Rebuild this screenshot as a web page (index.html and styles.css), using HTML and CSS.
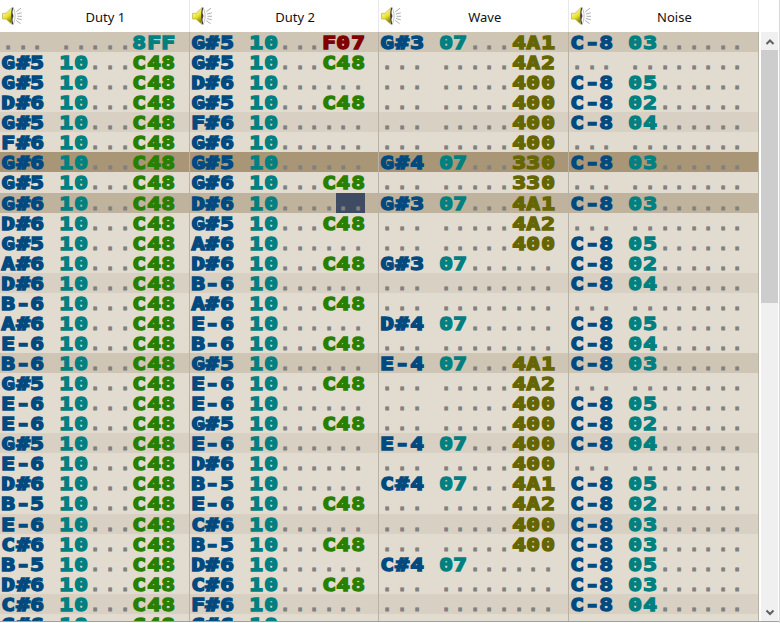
FILE: index.html
```html
<!DOCTYPE html>
<html lang="en">
<head>
<meta charset="utf-8">
<title>Pattern editor</title>
<link rel="stylesheet" href="styles.css">
</head>
<body>
<svg class="defs" aria-hidden="true">
  <defs>
    <linearGradient id="cone" x1="0" x2=".4" y1="0" y2="1">
      <stop offset=".3" stop-color="#faf69c"/>
      <stop offset=".65" stop-color="#e8e020"/>
      <stop offset="1" stop-color="#8c840c"/>
    </linearGradient>
    <symbol id="speaker" viewBox="0 0 20 18">
      <path d="M.5 6.300h3.500L9.800.8v16.400L4 12H.5z" fill="url(#cone)" stroke="#b8b050" stroke-width=".7"/>
      <path d="M10.800.600c3 3.400 3 13.400 0 16.800-1.200-4-1.200-12.800 0-16.800z" fill="#fff" stroke="#999" stroke-width=".6"/>
      <path d="M10.800.600c-1.400 4-1.400 12.800 0 16.800" fill="none" stroke="#222" stroke-width=".9"/>
      <path d="M10 6.200c1.800.8 1.800 4.600 0 5.600z" fill="#444"/>
      <path d="M14.300 4.800l4.700-3.600M15 7l4.800-1.200M15.500 9.300H20M15 11.500l4.800 1.300M14.300 13.500l4.300 3.200" fill="none" stroke="#999" stroke-width=".8"/>
    </symbol>
  </defs>
</svg>
<div class="editor">
  <div class="tracks">
    <header class="heads">
      <div class="head"><svg class="icon"><use href="#speaker"/></svg><span>Duty 1</span></div>
      <div class="head"><svg class="icon"><use href="#speaker"/></svg><span>Duty 2</span></div>
      <div class="head"><svg class="icon"><use href="#speaker"/></svg><span>Wave</span></div>
      <div class="head"><svg class="icon"><use href="#speaker"/></svg><span>Noise</span></div>
    </header>
    <main class="pattern" id="pattern"></main>
  </div>
  <aside class="side">
    <div class="scrollbar">
      <svg class="arrow" viewBox="0 0 17 18"><path d="M5.500 12l3.500-3.500 3.500 3.500" /></svg>
      <div class="thumb"></div>
      <svg class="arrow" viewBox="0 0 17 18"><path d="M5.500 7.500l3.500 3.500 3.500-3.500" /></svg>
    </div>
  </aside>
</div>
<script src="pattern.js"></script>
</body>
</html>
```
FILE: styles.css
```css
* { box-sizing: border-box; }
body { margin: 0; background: #fff; overflow: hidden; }
.defs { position: absolute; width: 0; height: 0; }
.editor { display: flex; width: 780px; height: 623px; border-right: 1px solid #d8d8d8; }
.tracks { width: 759px; display: flex; flex-direction: column; height: 622px; border-bottom: 1px solid #a0a0a0; }
.heads { display: grid; grid-template-columns: repeat(4, 189.700px); height: 32px; flex: none; }
.head { display: flex; align-items: center; border-right: 1px solid #e8e8e8; font: 13px/18px "Noto Sans", "Open Sans", sans-serif; color: #111; padding: 2px 0 0 2px; }
.head span { flex: 1; text-align: center; }
.icon { width: 20px; height: 18px; flex: none; margin-top: -2px; }
.pattern { flex: 1; overflow: hidden; background: #e2dcd0; }
.row { display: grid; grid-template-columns: repeat(4, 189.700px); height: 20.070px; }
.row.beat { background: #d8d0c3; }
.row.bar { background: #cfc5b5; }
.row.play { background: #a89676; }
.row.edit { background: #c0b39d; }
.cell { display: grid; grid-template-columns: repeat(12, 14.580px); border-right: 1px solid #b9b1a3; padding-left: .8px; font: bold 17px/22px "DejaVu Sans Mono", monospace; }
.ch { display: flex; justify-content: center; height: 20.070px; }
.ch b { display: block; width: 10.230px; height: 20px; transform: scaleX(1.340); -webkit-text-stroke: 1.350px currentColor; }
.ch.dash b { transform: scaleX(1.400); -webkit-text-stroke: 1.300px currentColor; }
.ch.dot b { transform: scaleX(1.050); -webkit-text-stroke: .8px currentColor; }
.note { color: #004a80; }
.inst { color: #008080; }
.dot { color: #808080; }
.vol { color: #288000; }
.speed { color: #800000; }
.arp { color: #666600; }
.cursor { background: #3f4a63; }
.side { width: 20px; height: 622px; padding: 32px 0 0 2px; border-bottom: 1px solid #a0a0a0; }
.scrollbar { height: 589px; width: 17px; display: flex; flex-direction: column; background: #f0f0f0; }
.thumb { height: 253px; background: #cdcdcd; margin-bottom: auto; }
.arrow { width: 17px; height: 18px; flex: none; fill: none; stroke: #606060; stroke-width: 2; }
```
FILE: pattern.js
```js
const rows = [
  "... .....8FF|G#5 10...F07|G#3 07...4A1|C-8 03......",
  "G#5 10...C48|G#5 10...C48|... .....4A2|... ........",
  "G#5 10...C48|D#6 10......|... .....400|C-8 05......",
  "D#6 10...C48|G#5 10...C48|... .....400|C-8 02......",
  "G#5 10...C48|F#6 10......|... .....400|C-8 04......",
  "F#6 10...C48|G#6 10......|... .....400|... ........",
  "G#6 10...C48|G#5 10......|G#4 07...330|C-8 03......",
  "G#5 10...C48|G#6 10...C48|... .....330|... ........",
  "G#6 10...C48|D#6 10......|G#3 07...4A1|C-8 03......",
  "D#6 10...C48|G#5 10...C48|... .....4A2|... ........",
  "G#5 10...C48|A#6 10......|... .....400|C-8 05......",
  "A#6 10...C48|D#6 10...C48|G#3 07......|C-8 02......",
  "D#6 10...C48|B-6 10......|... ........|C-8 04......",
  "B-6 10...C48|A#6 10...C48|... ........|... ........",
  "A#6 10...C48|E-6 10......|D#4 07......|C-8 05......",
  "E-6 10...C48|B-6 10...C48|... ........|C-8 04......",
  "B-6 10...C48|G#5 10......|E-4 07...4A1|C-8 03......",
  "G#5 10...C48|E-6 10...C48|... .....4A2|... ........",
  "E-6 10...C48|E-6 10......|... .....400|C-8 05......",
  "E-6 10...C48|G#5 10...C48|... .....400|C-8 02......",
  "G#5 10...C48|E-6 10......|E-4 07...400|C-8 04......",
  "E-6 10...C48|D#6 10......|... .....400|... ........",
  "D#6 10...C48|B-5 10......|C#4 07...4A1|C-8 05......",
  "B-5 10...C48|E-6 10...C48|... .....4A2|C-8 02......",
  "E-6 10...C48|C#6 10......|... .....400|C-8 03......",
  "C#6 10...C48|B-5 10...C48|... .....400|C-8 03......",
  "B-5 10...C48|D#6 10......|C#4 07......|C-8 05......",
  "D#6 10...C48|C#6 10...C48|... ........|C-8 03......",
  "C#6 10...C48|F#6 10......|... ........|C-8 04......",
  "G#6 10...C48|G#6 10......|... ........|... ........"
];
const PLAY = 6, EDIT = 8;

function colour(ch, i, text) {
  if (ch === ".") return "dot";
  if (i < 3) return ch === "-" ? "note dash" : "note";
  if (i < 6) return "inst";
  return { C: "vol", F: "speed", "8": "inst" }[text[9]] || "arp";
}

rows.forEach((line, r) => {
  const row = document.createElement("div");
  row.className = "row" + (r === PLAY ? " play" : r === EDIT ? " edit" : r % 16 === 0 ? " bar" : r % 4 === 0 ? " beat" : "");
  line.split("|").forEach((text, c) => {
    const cell = document.createElement("div");
    cell.className = "cell";
    [...text].forEach((ch, i) => {
      const s = document.createElement("span");
      s.className = "ch " + (ch === " " ? "" : colour(ch, i, text));
      if (r === EDIT && c === 1 && i > 9) s.className += " cursor";
      const b = document.createElement("b");
      b.textContent = ch;
      s.append(b);
      cell.append(s);
    });
    row.append(cell);
  });
  document.getElementById("pattern").append(row);
});
```
